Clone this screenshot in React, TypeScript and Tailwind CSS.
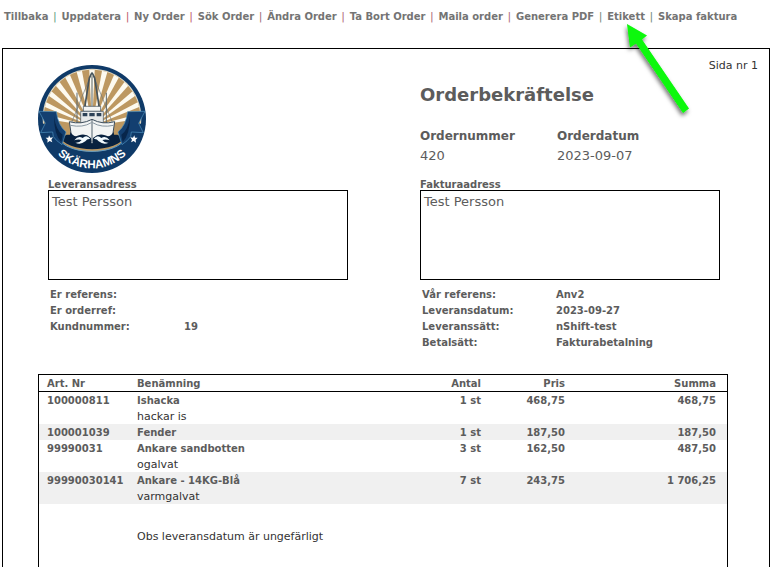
import React from "react";

const links = [
  { label: "Tillbaka", bar: "text-[#5fa382]" },
  { label: "Uppdatera", bar: "text-[#c0606e]" },
  { label: "Ny Order", bar: "text-[#c0606e]" },
  { label: "Sök Order", bar: "text-[#a0707a]" },
  { label: "Ändra Order", bar: "text-[#b06a7a]" },
  { label: "Ta Bort Order", bar: "text-[#b06a7a]" },
  { label: "Maila order", bar: "text-[#b06a7a]" },
  { label: "Generera PDF", bar: "text-[#748a7c]" },
  { label: "Etikett", bar: "text-[#748a7c]" },
  { label: "Skapa faktura", bar: "" },
];

const rows = [
  { nr: "100000811", name: "Ishacka", note: "hackar is", qty: "1 st", price: "468,75", sum: "468,75" },
  { nr: "100001039", name: "Fender", note: "", qty: "1 st", price: "187,50", sum: "187,50" },
  { nr: "99990031", name: "Ankare sandbotten", note: "ogalvat", qty: "3 st", price: "162,50", sum: "487,50" },
  { nr: "99990030141", name: "Ankare - 14KG-Blå", note: "varmgalvat", qty: "7 st", price: "243,75", sum: "1 706,25" },
];

const leftDetails = [
  ["Er referens:", ""],
  ["Er orderref:", ""],
  ["Kundnummer:", "19"],
];

const rightDetails = [
  ["Vår referens:", "Anv2"],
  ["Leveransdatum:", "2023-09-27"],
  ["Leveranssätt:", "nShift-test"],
  ["Betalsätt:", "Fakturabetalning"],
];

const rayAngles = [-78, -65, -52, -39, -26, -13, 0, 13, 26, 39, 52, 65, 78];

function Arrow() {
  return (
    <svg
      className="pointer-events-none absolute top-[11px] left-3 z-10"
      width="80"
      height="100"
      viewBox="620 20 80 100"
      aria-hidden="true"
    >
      <defs>
        <filter id="arrow-shadow" x="-20%" y="-20%" width="140%" height="140%">
          <feDropShadow dx="-1" dy="3" stdDeviation="2" floodColor="#000" floodOpacity="0.55" />
        </filter>
      </defs>
      <path
        d="M628 24 L648 35.5 L643 39.5 L690 108.5 L684 113 L637 43.5 L631 47.5 Z"
        fill="#08f808"
        filter="url(#arrow-shadow)"
      />
    </svg>
  );
}

function Logo() {
  return (
    <svg width="108" height="108" viewBox="24 21 324 324" role="img" aria-label="Skärhamns">
      <defs>
        <clipPath id="sky">
          <circle cx="186" cy="180" r="145" />
        </clipPath>
        <path id="name-arc" d="M38 183 A148 148 0 0 0 334 183" />
      </defs>
      <circle cx="186" cy="183" r="162" fill="#0f3a68" />
      <circle cx="186" cy="180" r="148" fill="#e2dcc8" />
      <circle cx="186" cy="180" r="145" fill="#bd9861" />
      <g clipPath="url(#sky)" fill="#fdfaf0">
        {rayAngles.map((a) => (
          <path key={a} d="M186 205 L177 20 L195 20 Z" transform={`rotate(${a} 186 205)`} />
        ))}
      </g>
      {/* lower ring */}
      <path d="M26 198 L60 196 L92 248 C130 292 242 292 280 248 L312 196 L346 198 A162 162 0 0 1 26 198 Z" fill="#0f3a68" />
      {/* sea */}
      <path d="M84 232 Q98 238 110 230 L262 230 Q276 238 290 232 C262 288 110 288 84 232 Z" fill="#08213f" />
      <path d="M92 250 C126 290 246 290 280 250" fill="none" stroke="#5f9ecb" strokeWidth="3" />
      {/* ribbon */}
      <path d="M27 160 L79 161 Q84 202 108 222 L96 260 Q78 248 70 236 L68 222 L32 224 L46 196 Z" fill="#133f70" stroke="#4f93c0" strokeWidth="2" />
      <path d="M345 160 L293 161 Q288 202 264 222 L276 260 Q294 248 302 236 L304 222 L340 224 L326 196 Z" fill="#133f70" stroke="#4f93c0" strokeWidth="2" />
      <path d="M72 174 Q78 218 98 230 L94 252 Q72 230 72 174 Z" fill="#08264b" />
      <path d="M300 174 Q294 218 274 230 L278 252 Q300 230 300 174 Z" fill="#08264b" />
      {/* rigging and masts */}
      <path d="M184 48 L123 198 M188 48 L249 198" stroke="#6b767a" strokeWidth="2" fill="none" />
      <path d="M186 44 L178 60 L158 188 M186 44 L194 60 L214 188" stroke="#46545c" strokeWidth="5" fill="none" />
      <path d="M186 50 V155" stroke="#9aa09b" strokeWidth="5" />
      <path d="M141 104 V198 M229 104 V198" stroke="#5c686e" strokeWidth="3" />
      {/* wheelhouse */}
      <path d="M160 145 H212 V160 H160 Z" fill="#f4f5f3" stroke="#3a4a58" strokeWidth="2" />
      <path d="M152 160 H220 V195 H152 Z" fill="#e6e9e9" stroke="#3a4a58" strokeWidth="2" />
      <path d="M158 165 H172 V175 H158 Z M178 165 H194 V175 H178 Z M200 165 H214 V175 H200 Z" fill="#2c4257" />
      {/* hull */}
      <path d="M118 191 Q154 201 186 184 Q218 201 254 191 L248 232 Q226 250 186 257 Q146 250 124 232 Z" fill="#f2f4f4" stroke="#3c4d5c" strokeWidth="3" />
      <path d="M121 202 Q158 210 184 194 M251 202 Q214 210 188 194" stroke="#8796a1" strokeWidth="3" fill="none" />
      <path d="M186 186 V252" stroke="#53626e" strokeWidth="3" />
      <path d="M121 222 Q132 240 147 232 Q166 225 183 240 L186 266 L189 240 Q206 225 225 232 Q240 240 251 222 L254 248 Q220 276 186 266 Q152 276 118 248 Z" fill="#08213f" />
      {/* bow wave */}
      <path d="M133 247 Q145 231 158 240 Q170 228 181 243 Q172 241 166 250 Q151 262 136 254 Q149 255 155 246 Q145 242 133 247 Z" fill="#f3fbff" />
      <path d="M239 247 Q227 231 214 240 Q202 228 191 243 Q200 241 206 250 Q221 262 236 254 Q223 255 217 246 Q227 242 239 247 Z" fill="#f3fbff" />
      {/* stars */}
      <path d="M57 232 L61 239 L69 238 L64 245 L67 253 L59 249 L52 254 L53 245 L47 239 L55 239 Z" fill="#fff" />
      <path d="M313 232 L309 239 L301 238 L306 245 L303 253 L311 249 L318 254 L317 245 L323 239 L315 239 Z" fill="#fff" />
      <text fill="#fff" fontSize="35" fontWeight="700" fontFamily="'Liberation Sans', Arial, sans-serif" textAnchor="middle">
        <textPath href="#name-arc" startOffset="50%">
          SKÄRHAMNS
        </textPath>
      </text>
    </svg>
  );
}

function Address({ title, name }: { title: string; name: string }) {
  return (
    <section>
      <h2 className="text-[10px] leading-[10px] font-bold">{title}</h2>
      <div className="h-[90px] border border-black p-[3px] text-[13px] leading-4">{name}</div>
    </section>
  );
}

function Details({ items }: { items: string[][] }) {
  return (
    <dl className="grid grid-cols-[134px_1fr] content-start px-[2px] text-[10px] leading-4 font-bold">
      {items.map(([k, v]) => (
        <React.Fragment key={k}>
          <dt>{k}</dt>
          <dd>{v}</dd>
        </React.Fragment>
      ))}
    </dl>
  );
}

export default function App() {
  return (
    <div className="flex min-h-screen flex-col bg-white pl-[2px] font-['Verdana','DejaVu_Sans',sans-serif] text-[#5c5c5c]">
      <nav className="h-12 pt-[9px] pl-[2px]">
        <ul className="flex text-[10px] leading-4 font-bold whitespace-nowrap text-[#747474]">
          {links.map((l, i) => (
            <li key={l.label} className="relative flex">
              <a href="#">{l.label}</a>
              {i < links.length - 1 && <span className={`w-[13px] text-center text-[11px] font-normal ${l.bar}`}>|</span>}
              {l.label === "Etikett" && <Arrow />}
            </li>
          ))}
        </ul>
      </nav>

      <main className="flex flex-1 flex-col border border-b-0 border-black pt-[9px] pl-[35px]">
        <p className="pr-[11px] text-right text-[11px] leading-4 text-[#333]">Sida nr 1</p>
        <div className="flex flex-1 flex-col pr-[41px]">
          <header className="-mt-[9px] grid grid-cols-2 gap-x-[72px] pr-2 pl-[10px]">
            <div className="-ml-[10px] h-[115px]">
              <Logo />
            </div>
            <div className="pt-[18px]">
              <h1 className="text-[18px] leading-6 font-bold">Orderbekräftelse</h1>
              <dl className="mt-5 grid grid-flow-col grid-cols-[137px_1fr] grid-rows-2 text-[13px] leading-[19px]">
                <dt className="text-[12px] font-bold">Ordernummer</dt>
                <dd>420</dd>
                <dt className="text-[12px] font-bold">Orderdatum</dt>
                <dd>2023-09-07</dd>
              </dl>
            </div>
          </header>

          <div className="grid grid-cols-2 gap-x-[72px] gap-y-[7px] pr-2 pl-[10px]">
            <Address title="Leveransadress" name="Test Persson" />
            <Address title="Fakturaadress" name="Test Persson" />
            <Details items={leftDetails} />
            <Details items={rightDetails} />
          </div>

          <div className="mt-[23px] flex-1 border border-b-0 border-black text-[10px] leading-[14px]">
            <table className="w-full table-fixed border-collapse">
              <colgroup>
                <col className="w-[98px]" />
                <col />
                <col className="w-[60px]" />
                <col className="w-[84px]" />
                <col className="w-[162px]" />
              </colgroup>
              <thead>
                <tr className="border-b border-black text-left">
                  <th className="pt-[2px] pl-2">Art. Nr</th>
                  <th className="pt-[2px]">Benämning</th>
                  <th className="pt-[2px] text-right">Antal</th>
                  <th className="pt-[2px] text-right">Pris</th>
                  <th className="pt-[2px] pr-[11px] text-right">Summa</th>
                </tr>
              </thead>
              <tbody>
                {rows.map((r) => (
                  <tr key={r.nr} className="align-top font-bold even:bg-[#f0f0f0]">
                    <td className="pt-[2px] pl-2">{r.nr}</td>
                    <td className="pt-[2px]">
                      {r.name}
                      {r.note && <div className="pt-[2px] text-[11px] font-normal text-[#333]">{r.note}</div>}
                    </td>
                    <td className="pt-[2px] text-right">{r.qty}</td>
                    <td className="pt-[2px] text-right">{r.price}</td>
                    <td className="pt-[2px] pr-[11px] text-right">{r.sum}</td>
                  </tr>
                ))}
              </tbody>
            </table>
            <p className="pt-[26px] pl-[98px] text-[11px] text-[#333]">Obs leveransdatum är ungefärligt</p>
          </div>
        </div>
      </main>
    </div>
  );
}
